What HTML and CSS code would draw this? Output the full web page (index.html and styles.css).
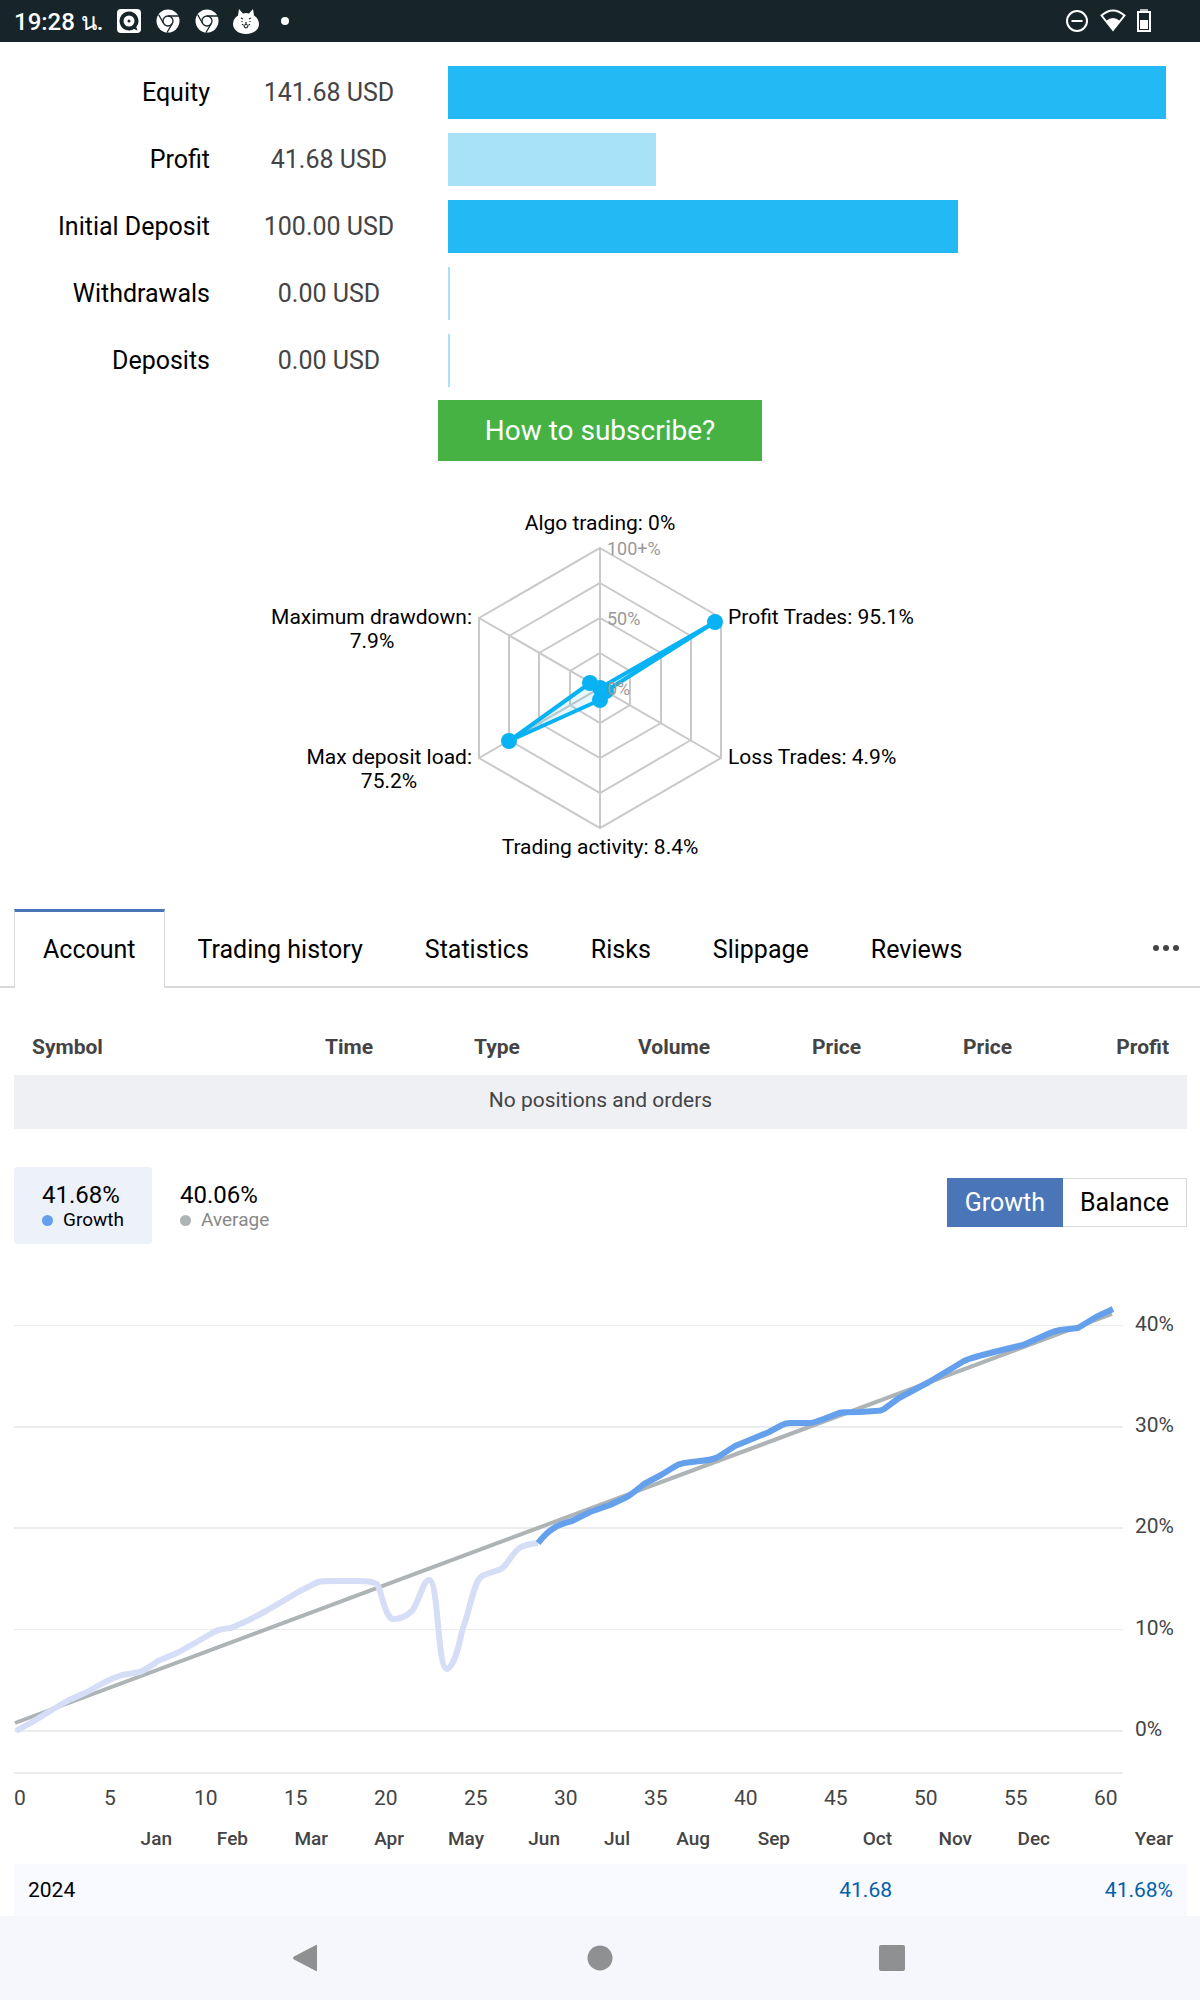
FILE: index.html
```
<!DOCTYPE html>
<html lang="en">
<head>
    <meta charset="UTF-8">
    <meta name="viewport" content="width=device-width, initial-scale=1.0">
    <title>Signal - Account</title>
    <link rel="stylesheet" href="styles.css">
</head>
<body>
    <header class="status-bar">
        <span class="clock">19:28 น.</span>
        <svg class="app-icon" width="26" height="26" viewBox="0 0 26 26">
            <rect x="1" y="1" width="24" height="24" rx="4" fill="#fff"/>
            <path d="M13 3.500a9.500 9.500 0 1 0 5 17.600l3.500 1.400-1.200-3.500A9.500 9.500 0 0 0 13 3.500z" fill="#172429"/>
            <circle cx="13" cy="13" r="5.500" fill="#fff"/>
            <circle cx="13" cy="13" r="1.500" fill="#172429"/>
        </svg>
        <svg class="app-icon" width="26" height="26" viewBox="0 0 26 26">
            <circle cx="13" cy="13" r="11.500" fill="#fff"/>
            <g fill="none" stroke="#172429" stroke-width="1.300">
                <circle cx="13" cy="13" r="5"/>
                <path d="M13 8h11M8.700 15.500L3.500 6.500M17.300 15.500L12 24.500"/>
            </g>
        </svg>
        <svg class="app-icon" width="26" height="26" viewBox="0 0 26 26">
            <circle cx="13" cy="13" r="11.500" fill="#fff"/>
            <g fill="none" stroke="#172429" stroke-width="1.300">
                <circle cx="13" cy="13" r="5"/>
                <path d="M13 8h11M8.700 15.500L3.500 6.500M17.300 15.500L12 24.500"/>
            </g>
        </svg>
        <svg class="app-icon" width="26" height="26" viewBox="0 0 26 26">
            <path d="M6 1l4 4.500q3-.8 6 0L20 1l1 6.500q5 3 5 8.500c0 6-6 10-13 10S0 22 0 16q0-5.500 5-8.500z" fill="#fff"/>
            <g fill="none" stroke="#172429" stroke-width="1.200">
                <path d="M8 10l2 1M18 10l-2 1M9 13v1M17 13v1M9 16q2 2.500 4 0 2 2.500 4 0M11 18q2 4 4 0M13 14v2"/>
            </g>
        </svg>
        <span class="more-dot"></span>
        <div class="system-icons">
            <svg width="24" height="24" viewBox="0 0 24 24">
                <circle cx="12" cy="12" r="10" fill="none" stroke="#fff" stroke-width="2"/>
                <path d="M6.500 12h11" stroke="#fff" stroke-width="2"/>
            </svg>
            <svg width="26" height="24" viewBox="0 0 26 24">
                <path d="M1.500 6.500Q13-3.500 24.500 6.500L13 21z" fill="none" stroke="#fff" stroke-width="2"/>
                <path d="M6 12q7-6 14 0l-7 9.500z" fill="#fff"/>
            </svg>
            <svg width="14" height="24" viewBox="0 0 14 24">
                <path d="M3 0h8v2H3z" fill="#b5bbbd"/>
                <rect x="1" y="3" width="12" height="19" fill="none" stroke="#fff" stroke-width="2"/>
                <path d="M3 11h8v9H3z" fill="#fff"/>
            </svg>
        </div>
    </header>

    <main>
        <div class="funds">
            <span class="funds-name">Equity</span>
            <span class="funds-value">141.68 USD</span>
            <div class="funds-track"><div class="funds-bar" style="width: 100%"></div></div>

            <span class="funds-name">Profit</span>
            <span class="funds-value">41.68 USD</span>
            <div class="funds-track"><div class="funds-bar light" style="width: 29%"></div></div>

            <span class="funds-name">Initial Deposit</span>
            <span class="funds-value">100.00 USD</span>
            <div class="funds-track"><div class="funds-bar" style="width: 71%"></div></div>

            <span class="funds-name">Withdrawals</span>
            <span class="funds-value">0.00 USD</span>
            <div class="funds-track"><div class="funds-bar light" style="width: 0%"></div></div>

            <span class="funds-name">Deposits</span>
            <span class="funds-value">0.00 USD</span>
            <div class="funds-track"><div class="funds-bar light" style="width: 0%"></div></div>
        </div>

        <button class="subscribe" type="button">How to subscribe?</button>

        <svg class="radar" viewBox="-350 -198 700 390" role="img" aria-label="Signal radar">
            <!-- grid -->
            <g class="radar-grid">
                <path d="M0-140L121-70V70L0 140L-121 70V-70z"/>
                <path d="M0-105L91-52V52L0 105L-91 52V-52z"/>
                <path d="M0-70L61-35V35L0 70L-61 35V-35z"/>
                <path d="M0-35L30-17V17L0 35L-30 17V-17z"/>
                <path d="M0-140V140M-121-70L121 70M-121 70L121-70"/>
            </g>
            <!-- values -->
            <path class="radar-area" d="M0 0L115-66L6 3L0 12L-91 53L-10-5z"/>
            <g class="radar-points">
                <circle cx="0" cy="0" r="8"/>
                <circle cx="115" cy="-66" r="8"/>
                <circle cx="6" cy="3" r="8"/>
                <circle cx="0" cy="12" r="8"/>
                <circle cx="-91" cy="53" r="8"/>
                <circle cx="-10" cy="-5" r="8"/>
            </g>
            <g class="radar-scale">
                <text x="7" y="-133">100+%</text>
                <text x="7" y="-63">50%</text>
                <text x="7" y="7">0%</text>
            </g>
            <g class="radar-labels">
                <text x="0" y="-158" text-anchor="middle">Algo trading: 0%</text>
                <text x="128" y="-64">Profit Trades: 95.1%</text>
                <text x="128" y="76">Loss Trades: 4.9%</text>
                <text x="0" y="166" text-anchor="middle">Trading activity: 8.4%</text>
                <text x="-128" y="76" text-anchor="end">Max deposit load:</text>
                <text x="-211" y="100" text-anchor="middle">75.2%</text>
                <text x="-128" y="-64" text-anchor="end">Maximum drawdown:</text>
                <text x="-228" y="-40" text-anchor="middle">7.9%</text>
            </g>
        </svg>

        <nav class="tabs">
            <a href="#account" class="tab active">Account</a>
            <a href="#history" class="tab">Trading history</a>
            <a href="#statistics" class="tab">Statistics</a>
            <a href="#risks" class="tab">Risks</a>
            <a href="#slippage" class="tab">Slippage</a>
            <a href="#reviews" class="tab">Reviews</a>
            <button class="tabs-more" type="button" aria-label="More"><i></i><i></i><i></i></button>
        </nav>

        <section class="content">
            <table class="positions">
                <thead>
                    <tr>
                        <th>Symbol</th>
                        <th>Time</th>
                        <th>Type</th>
                        <th>Volume</th>
                        <th>Price</th>
                        <th>Price</th>
                        <th>Profit</th>
                    </tr>
                </thead>
                <tbody>
                    <tr>
                        <td colspan="7">No positions and orders</td>
                    </tr>
                </tbody>
            </table>

            <div class="chart-head">
                <div class="legend active">
                    <strong>41.68%</strong>
                    <span>Growth</span>
                </div>
                <div class="legend average">
                    <strong>40.06%</strong>
                    <span>Average</span>
                </div>
                <div class="switch">
                    <button class="active" type="button">Growth</button>
                    <button type="button">Balance</button>
                </div>
            </div>

            <svg class="chart" viewBox="0 0 1173 558" role="img" aria-label="Growth chart">
                <g class="chart-grid">
                    <path d="M0 65.500H1109M0 369.500H1109" stroke-width="1"/>
                    <path d="M0 167H1109M0 268H1109M0 471H1109M0 513H1109" stroke-width="2"/>
                </g>
                <path class="line-average" d="M1 463L1098 54"/>
                <path class="line-old" d="M2 471L20 461L36 451L55 440L73 432L91 422Q99 418 108 415L126 412Q133 409 144 401L163 393L181 383L200 372Q205 369 217 368L235 360L252 351L269 341L286 331L304 322Q308 321 322 321H345Q358 321 363 324C368 332 370 354 378 359Q388 360 398 351C406 340 409 320 415 320C425 320 423 409 433 409C443 405 446 375 450 365C456 350 460 317 470 315L487 309C494 305 498 292 507 287Q514 284 524 283"/>
                <path class="line-growth" d="M524 283Q534 271 540 268Q544 265 558 261L576 252L596 245L613 237Q618 234 630 224L647 215L660 207Q664 204 670 203L686 201Q698 200 704 197L721 186L738 179L755 172L768 165Q772 163 776 163H796Q800 163 825 153Q829 152 846 152L861 151Q867 151 870 149L885 138L915 122L950 101Q956 98 984 91L1009 85L1036 73Q1041 71 1046 70L1064 68L1082 57L1099 49"/>
                <g class="chart-text">
                    <text x="1121" y="71">40%</text>
                    <text x="1121" y="172">30%</text>
                    <text x="1121" y="273">20%</text>
                    <text x="1121" y="375">10%</text>
                    <text x="1121" y="476">0%</text>
                    <text x="0" y="545">0</text>
                    <text x="90" y="545">5</text>
                    <text x="180" y="545">10</text>
                    <text x="270" y="545">15</text>
                    <text x="360" y="545">20</text>
                    <text x="450" y="545">25</text>
                    <text x="540" y="545">30</text>
                    <text x="630" y="545">35</text>
                    <text x="720" y="545">40</text>
                    <text x="810" y="545">45</text>
                    <text x="900" y="545">50</text>
                    <text x="990" y="545">55</text>
                    <text x="1080" y="545">60</text>
                </g>
            </svg>

            <table class="months">
                <colgroup>
                    <col class="c96"><col class="c76"><col class="c76"><col class="c80"><col class="c76"><col class="c80"><col class="c76">
                    <col class="c70"><col class="c80"><col class="c80"><col class="c102"><col class="c80"><col class="c78"><col class="c123">
                </colgroup>
                <thead>
                    <tr>
                        <th></th>
                        <th>Jan</th>
                        <th>Feb</th>
                        <th>Mar</th>
                        <th>Apr</th>
                        <th>May</th>
                        <th>Jun</th>
                        <th>Jul</th>
                        <th>Aug</th>
                        <th>Sep</th>
                        <th>Oct</th>
                        <th>Nov</th>
                        <th>Dec</th>
                        <th>Year</th>
                    </tr>
                </thead>
                <tbody>
                    <tr>
                        <td class="year">2024</td>
                        <td></td><td></td><td></td><td></td><td></td><td></td><td></td><td></td><td></td>
                        <td>41.68</td>
                        <td></td><td></td>
                        <td>41.68%</td>
                    </tr>
                </tbody>
            </table>
        </section>
    </main>

    <footer class="nav-bar">
        <button type="button" aria-label="Back">
            <svg width="30" height="30" viewBox="0 0 30 30"><path d="M22 2.500Q24 1 24 3v24q0 2-2 .5L1 16.500q-2-1.500 0-3z"/></svg>
        </button>
        <button type="button" aria-label="Home">
            <svg width="30" height="30" viewBox="0 0 30 30"><circle cx="15" cy="15" r="12.500"/></svg>
        </button>
        <button type="button" aria-label="Recent apps">
            <svg width="30" height="30" viewBox="0 0 30 30"><rect x="2" y="2" width="26" height="26" rx="2"/></svg>
        </button>
    </footer>
</body>
</html>
```
FILE: styles.css
```
* {
    box-sizing: border-box;
}
body {
    margin: 0;
    min-height: 100vh;
    display: flex;
    flex-direction: column;
    font-family: Roboto, "Noto Sans", sans-serif;
    font-size: 21px;
    color: #000;
    background-color: #fff;
}
main {
    flex: 1;
}
button {
    font-family: inherit;
    border: none;
    cursor: pointer;
}
table {
    width: 100%;
    border-collapse: collapse;
    table-layout: fixed;
}

/* status bar */
.status-bar {
    height: 42px;
    padding: 0 49px 0 14px;
    display: flex;
    align-items: center;
    background-color: #172429;
    color: #fff;
}
.clock {
    width: 102px;
    font-size: 24px;
    font-weight: 500;
    white-space: nowrap;
}
.app-icon {
    margin-right: 13px;
}
.more-dot {
    width: 8px;
    height: 8px;
    margin-left: 9px;
    border-radius: 50%;
    background-color: #fff;
}
.system-icons {
    display: flex;
    gap: 11px;
    margin-left: auto;
}

/* funds */
.funds {
    display: grid;
    grid-template-columns: 210px 238px 1fr;
    row-gap: 14px;
    align-items: center;
    padding: 24px 34px 0 0;
    font-size: 25px;
    line-height: 53px;
}
.funds-name {
    text-align: right;
}
.funds-value {
    text-align: center;
    color: #444;
}
.funds-bar {
    height: 53px;
    min-width: 2px;
    background-color: #22b9f4;
}
.funds-bar.light {
    background-color: #a7e2f9;
}
.subscribe {
    display: block;
    height: 61px;
    margin: 13px auto 0;
    padding: 0 47px;
    font-size: 28px;
    color: #fff;
    background-color: #45b243;
}

/* radar */
.radar {
    display: block;
    width: 100%;
    max-width: 700px;
    margin: 29px auto 0;
}
.radar-grid {
    fill: none;
    stroke: #c9c9c9;
    stroke-width: 2;
}
.radar-area {
    fill: rgba(9, 178, 243, 0.1);
    stroke: #09b2f3;
    stroke-width: 4;
    stroke-linejoin: round;
}
.radar-points {
    fill: #09b2f3;
}
.radar-labels {
    font-size: 21px;
}
.radar-scale {
    font-size: 18px;
    fill: #999;
}

/* tabs */
.tabs {
    height: 79px;
    margin-top: 29px;
    padding: 0 14px;
    display: flex;
    gap: 4px;
    border-bottom: 2px solid #d9d9d9;
    font-size: 25px;
}
.tab {
    height: 79px;
    padding: 0 28px;
    border: 1px solid transparent;
    border-top-width: 3px;
    border-bottom: none;
    line-height: 76px;
    color: #000;
    text-decoration: none;
    white-space: nowrap;
}
.tab.active {
    border-color: #d9d9d9;
    border-top-color: #4a76b8;
    background-color: #fff;
}
.tabs-more {
    margin-left: auto;
    padding: 0 7px;
    display: flex;
    align-items: center;
    gap: 4px;
    background: none;
}
.tabs-more i {
    width: 6px;
    height: 6px;
    border-radius: 50%;
    background-color: #444;
}

.content {
    padding: 33px 13px 0 14px;
}

/* positions */
.positions th {
    height: 54px;
    padding: 0 18px 2px;
    font-weight: 700;
    text-align: right;
    color: #444;
}
.positions th:nth-child(1) {
    width: 261px;
    text-align: left;
}
.positions th:nth-child(2),
.positions th:nth-child(3) {
    width: 148px;
    text-align: center;
}
.positions th:nth-child(4) {
    width: 157px;
}
.positions th:nth-child(5),
.positions th:nth-child(6) {
    width: 151px;
}
.positions td {
    height: 54px;
    padding: 0 18px 4px;
    text-align: center;
    color: #444;
    background-color: #eff0f4;
}

/* growth chart */
.chart-head {
    display: flex;
    align-items: center;
    margin-top: 38px;
}
.legend {
    height: 77px;
    padding: 14px 28px;
    border-radius: 3px;
}
.legend.active {
    background-color: #edf1f9;
}
.legend strong {
    display: block;
    font-size: 24px;
    font-weight: 400;
    line-height: 28px;
}
.legend span {
    display: flex;
    align-items: center;
    gap: 10px;
    font-size: 19px;
    line-height: 22px;
}
.legend span::before {
    content: '';
    width: 11px;
    height: 11px;
    border-radius: 50%;
    background-color: #64a0ec;
}
.legend.average span {
    color: #888;
}
.legend.average span::before {
    background-color: #aeb3b6;
}
.switch {
    display: flex;
    margin-left: auto;
    margin-top: -6px;
}
.switch button {
    height: 49px;
    padding: 0 17px;
    border: 1px solid #d9d9d9;
    border-left: none;
    font-size: 25px;
    color: #000;
    background-color: #fff;
}
.switch button.active {
    padding: 0 18px;
    border: none;
    color: #fff;
    background-color: #4a76b8;
}
.chart {
    display: block;
    width: 100%;
    margin-top: 16px;
}
.chart-grid {
    stroke: #ececec;
}
.chart path {
    fill: none;
}
.line-average {
    stroke: #aeb3b6;
    stroke-width: 4;
}
.line-old {
    stroke: #d5ddf7;
    stroke-width: 6;
    stroke-linejoin: round;
}
.line-growth {
    stroke: #64a0ec;
    stroke-width: 6;
    stroke-linejoin: round;
}
.chart-text {
    font-size: 21px;
    fill: #444;
}

/* months */
.months th,
.months td {
    padding: 0 14px 0 0;
    text-align: right;
}
.months th {
    height: 46px;
    padding-bottom: 5px;
    font-size: 19px;
    font-weight: 500;
    color: #444;
}
.months td {
    height: 52px;
    color: #0060a8;
    background-color: #f9faff;
}
.months .year {
    padding-left: 14px;
    text-align: left;
    color: #000;
}
.c70 { width: 70px; }
.c76 { width: 76px; }
.c78 { width: 78px; }
.c80 { width: 80px; }
.c96 { width: 96px; }
.c102 { width: 102px; }
.c123 { width: 123px; }

/* bottom navigation */
.nav-bar {
    height: 84px;
    display: flex;
    justify-content: center;
    align-items: center;
    gap: 250px;
    background-color: #f6f7fd;
}
.nav-bar button {
    padding: 6px;
    background: none;
}
.nav-bar svg {
    display: block;
    fill: #8f9091;
}
```
